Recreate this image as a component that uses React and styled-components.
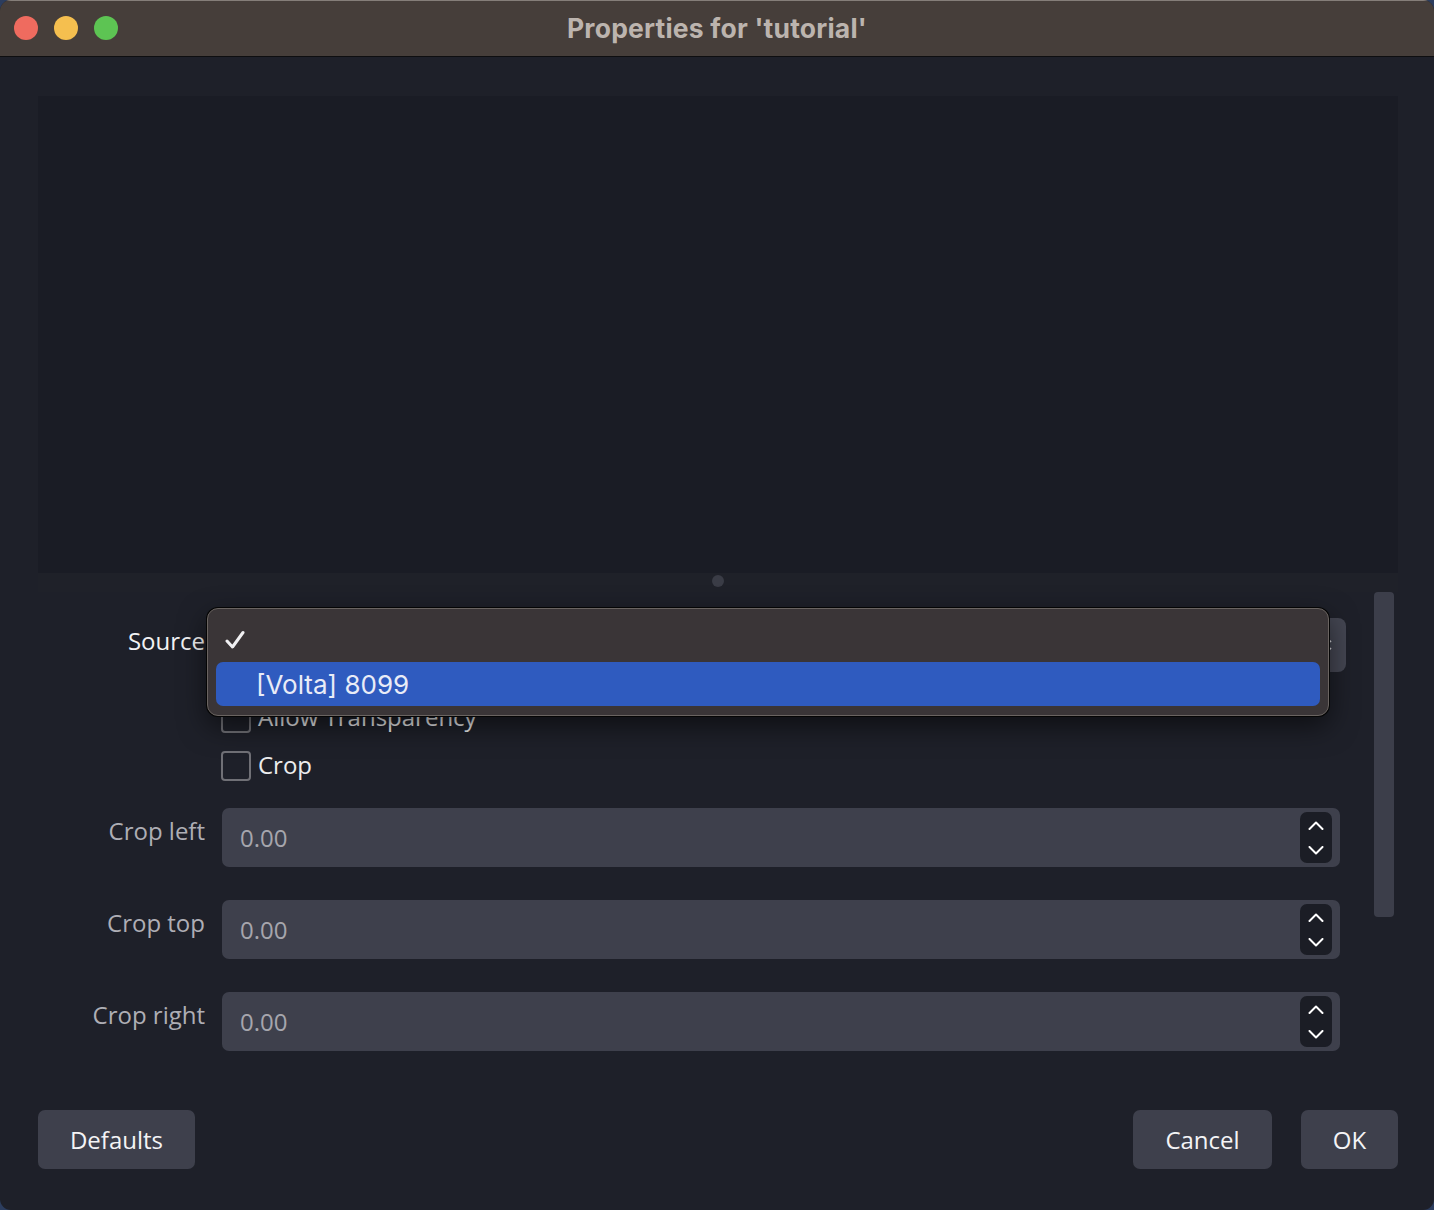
import React from "react";
import styled, { createGlobalStyle } from "styled-components";

const GlobalStyle = createGlobalStyle`
  html, body {
    margin: 0;
    padding: 0;
    background: #2c3d5e;
  }
  * { box-sizing: border-box; }
`;

const Window = styled.div`
  width: 1434px;
  height: 1210px;
  display: flex;
  flex-direction: column;
  background: #1e2029;
  border-radius: 11px;
  overflow: hidden;
  font-family: "Open Sans", "Liberation Sans", sans-serif;
`;

const TitleBar = styled.div`
  position: relative;
  height: 57px;
  flex: none;
  display: flex;
  align-items: center;
  justify-content: center;
  padding-bottom: 2px;
  background: #463e3a;
  border-top: 1px solid #857e79;
  border-bottom: 1px solid #0e0e10;
`;

const Lights = styled.div`
  position: absolute;
  left: 14px;
  top: 15px;
  display: flex;
  gap: 16px;
`;

const Light = styled.span`
  width: 24px;
  height: 24px;
  border-radius: 50%;
  background: ${(p) => p.$color};
`;

const Title = styled.div`
  font-family: Inter, "Liberation Sans", sans-serif;
  font-weight: 700;
  font-size: 26.5px;
  color: #bcb4ae;
  letter-spacing: 0.2px;
`;

const Body = styled.div`
  flex: 1;
  display: flex;
  flex-direction: column;
  padding: 39px 36px 41px 38px;
`;

const Preview = styled.div`
  height: 477px;
  flex: none;
  background: #1a1c25;
`;

const Splitter = styled.div`
  height: 19px;
  flex: none;
  display: flex;
  justify-content: center;
  padding-top: 2px;
  background: #1f2129;
`;

const Dot = styled.span`
  width: 12px;
  height: 12px;
  border-radius: 50%;
  background: #3a3c46;
`;

const Props = styled.div`
  height: 488px;
  flex: none;
  display: flex;
  gap: 28px;
  padding-right: 4px;
`;

const Form = styled.div`
  flex: 1;
  display: flex;
  flex-direction: column;
  padding-top: 26px;
`;

const Row = styled.div`
  display: grid;
  grid-template-columns: 167px 1fr;
  column-gap: 17px;
  margin-top: ${(p) => p.$gap || 0}px;
`;

const Label = styled.div`
  text-align: right;
  font-size: 24px;
  line-height: 32px;
  padding-top: 7px;
  color: ${(p) => (p.$dim ? "#aeaeb5" : "#f2f2f4")};
  white-space: nowrap;
`;

const ComboWrap = styled.div`
  position: relative;
`;

const Combo = styled.div`
  height: 54px;
  border-radius: 8px;
  background: #444652;
  display: flex;
  align-items: center;
  justify-content: flex-end;
  padding-right: 14px;
`;

const Popup = styled.div`
  position: absolute;
  left: -15px;
  top: -10px;
  width: 1122px;
  padding: 9px 8px;
  background: #3a3537;
  border: 1px solid #6a6461;
  border-radius: 11px;
  box-shadow: 0 0 0 1px #050505, 0 10px 28px rgba(0, 0, 0, 0.55);
  z-index: 5;
`;

const Item = styled.div`
  height: 44px;
  display: flex;
  align-items: center;
  padding-left: ${(p) => (p.$check ? 9 : 40)}px;
  border-radius: 7px;
  background: ${(p) => (p.$active ? "#2f5bbf" : "transparent")};
  font-family: Inter, "Liberation Sans", sans-serif;
  font-size: 26px;
  color: #e9ecf7;
`;

const Check = styled.label`
  display: flex;
  align-items: center;
  gap: 7px;
  margin-left: -1px;
  height: 30px;
  font-size: 24px;
  line-height: 30px;
  padding-bottom: 2px;
  color: #ececee;
`;

const Box = styled.span`
  width: 30px;
  height: 30px;
  border: 2px solid #707076;
  border-radius: 4px;
  flex: none;
  margin-top: 2px;
`;

const Spin = styled.div`
  height: 59px;
  margin-right: 6px;
  border-radius: 7px;
  background: #3e404c;
  display: flex;
  align-items: center;
  justify-content: space-between;
  padding: 0 8px 0 18px;
  font-size: 24px;
  color: #a6a6ad;
`;

const SpinButtons = styled.div`
  width: 32px;
  height: 51px;
  border-radius: 7px;
  background: #1b1d25;
  display: flex;
  flex-direction: column;
  align-items: center;
  justify-content: center;
  gap: 16px;
`;

const Scrollbar = styled.div`
  width: 20px;
  height: 325px;
  border-radius: 4px;
  background: #3c3e4a;
  flex: none;
`;

const Buttons = styled.div`
  margin-top: 30px;
  display: flex;
  align-items: center;
  gap: 29px;
`;

const Spacer = styled.div`
  flex: 1;
`;

const Button = styled.button`
  height: 59px;
  width: ${(p) => p.$w}px;
  border: none;
  border-radius: 7px;
  background: #3e404c;
  color: #f4f4f6;
  font-family: "Open Sans", "Liberation Sans", sans-serif;
  font-size: 24px;
  padding: 0;
`;

const Chevron = ({ up }) => (
  <svg width="16" height="9" viewBox="0 0 16 9">
    <path
      d={up ? "M1.5 8 L8 1.5 L14.5 8" : "M1.5 1 L8 7.5 L14.5 1"}
      fill="none"
      stroke="#fff"
      strokeWidth="2"
      strokeLinecap="round"
      strokeLinejoin="round"
    />
  </svg>
);

const SpinRow = ({ label, gap }) => (
  <Row $gap={gap}>
    <Label $dim>{label}</Label>
    <Spin>
      <span>0.00</span>
      <SpinButtons>
        <Chevron up />
        <Chevron />
      </SpinButtons>
    </Spin>
  </Row>
);

export default function App() {
  return (
    <>
      <GlobalStyle />
      <Window>
        <TitleBar>
          <Lights>
            <Light $color="#ef6b5f" />
            <Light $color="#f5bf4f" />
            <Light $color="#5dc453" />
          </Lights>
          <Title>Properties for 'tutorial'</Title>
        </TitleBar>
        <Body>
          <Preview />
          <Splitter>
            <Dot />
          </Splitter>
          <Props>
            <Form>
              <Row>
                <Label>Source</Label>
                <ComboWrap>
                  <Combo>
                    <svg width="12" height="22" viewBox="0 0 12 22">
                      <path d="M1 8 L6 3 L11 8 M1 14 L6 19 L11 14" fill="none" stroke="#d8d8dc" strokeWidth="1.6" />
                    </svg>
                  </Combo>
                  <Popup>
                    <Item $check>
                      <svg width="20" height="20" viewBox="0 0 20 20">
                        <path d="M2 11 L7.5 17 L18 2.5" fill="none" stroke="#f0f0f2" strokeWidth="3" strokeLinecap="round" strokeLinejoin="round" />
                      </svg>
                    </Item>
                    <Item $active>[Volta] 8099</Item>
                  </Popup>
                </ComboWrap>
              </Row>
              <Row $gap={31}>
                <span />
                <Check>
                  <Box />
                  Allow Transparency
                </Check>
              </Row>
              <Row $gap={18}>
                <span />
                <Check>
                  <Box />
                  Crop
                </Check>
              </Row>
              <SpinRow label="Crop left" gap={27} />
              <SpinRow label="Crop top" gap={33} />
              <SpinRow label="Crop right" gap={33} />
            </Form>
            <Scrollbar />
          </Props>
          <Buttons>
            <Button $w={157}>Defaults</Button>
            <Spacer />
            <Button $w={139}>Cancel</Button>
            <Button $w={97}>OK</Button>
          </Buttons>
        </Body>
      </Window>
    </>
  );
}
